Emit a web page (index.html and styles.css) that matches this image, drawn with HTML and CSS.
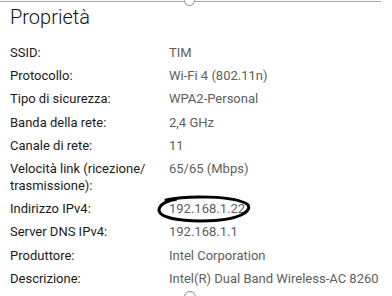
FILE: index.html
```html
<!DOCTYPE html>
<html lang="it">
<head>
    <meta charset="UTF-8">
    <title>Proprietà</title>
    <link rel="stylesheet" href="styles.css">
</head>
<body>
    <div class="top-rule"><span class="knob"></span></div>
    <h1>Proprietà</h1>
    <div class="props">
        <div class="label">SSID:</div>
        <div class="value">TIM</div>
        <div class="label">Protocollo:</div>
        <div class="value">Wi-Fi 4 (802.11n)</div>
        <div class="label">Tipo di sicurezza:</div>
        <div class="value">WPA2-Personal</div>
        <div class="label">Banda della rete:</div>
        <div class="value">2,4 GHz</div>
        <div class="label">Canale di rete:</div>
        <div class="value">11</div>
        <div class="label">Velocità link (ricezione/<br>trasmissione):</div>
        <div class="value">65/65 (Mbps)</div>
        <div class="label">Indirizzo IPv4:</div>
        <div class="value circled">192.168.1.22
            <svg class="ring" width="96" height="28" viewBox="0 0 96 28">
                <path d="M10 5 C 32 0, 78 1, 91 9 C 97 14, 88 24.5, 53 25.8 C 23 26.8, 2 22.5, 3 14.5 C 4 9, 12 5.5, 20 4.2" fill="none" stroke="#000" stroke-width="3" stroke-linecap="round"/>
            </svg>
        </div>
        <div class="label">Server DNS IPv4:</div>
        <div class="value">192.168.1.1</div>
        <div class="label">Produttore:</div>
        <div class="value">Intel Corporation</div>
        <div class="label">Descrizione:</div>
        <div class="value">Intel(R) Dual Band Wireless-AC 8260</div>
    </div>
    <span class="bottom-knob"></span>
</body>
</html>
```

FILE: styles.css
```css
body {
    margin: 0;
    padding: 0 10px;
    height: 296px;
    overflow: hidden;
    position: relative;
    background-color: #fff;
    font-family: Roboto, "Noto Sans", sans-serif;
    color: #1b1b1b;
}

.top-rule {
    position: absolute;
    top: 1px;
    left: 0;
    width: 381px;
    border-top: 1px solid #a6a6a6;
}

.knob {
    position: absolute;
    left: 184px;
    top: -7px;
    width: 9px;
    height: 9px;
    border: 1px solid #8a8a8a;
    border-radius: 50%;
    background-color: #fff;
}

.bottom-knob {
    position: absolute;
    left: 184px;
    top: 291px;
    width: 10px;
    height: 10px;
    border: 1px solid #8a8a8a;
    border-radius: 50%;
}

h1 {
    margin: 0;
    padding-top: 5px;
    font-size: 20px;
    font-weight: 300;
    line-height: 24px;
    color: #111;
}

.props {
    display: grid;
    grid-template-columns: 159px auto;
    row-gap: 6.2px;
    margin-top: 15px;
    font-size: 13px;
    line-height: 17px;
}

.value {
    color: #606060;
}

.circled {
    position: relative;
}

.ring {
    position: absolute;
    left: -13px;
    top: -5px;
}
```
